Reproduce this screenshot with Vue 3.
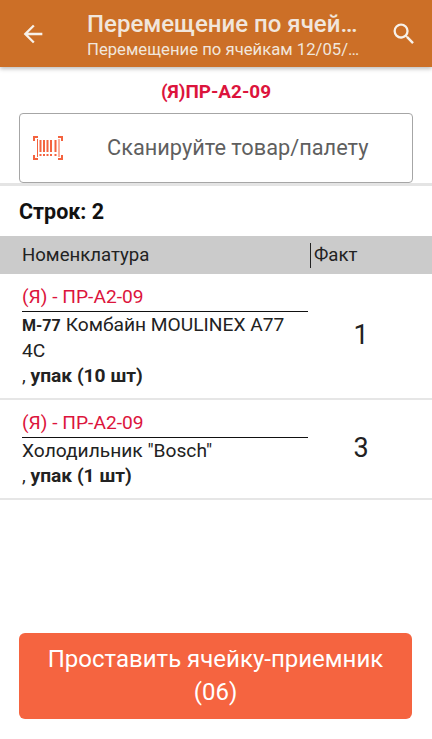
<script setup>
const rows = [
  { id: 1, cell: '(Я) - ПР-А2-09', code: 'М-77', name: 'Комбайн MOULINEX A77 4C', pack: 'упак (10 шт)', fact: 1 },
  { id: 2, cell: '(Я) - ПР-А2-09', code: '', name: 'Холодильник "Bosch"', pack: 'упак (1 шт)', fact: 3 },
];
</script>

<template>
  <div class="screen">
    <header class="toolbar">
      <svg class="back" width="28" height="28" viewBox="0 0 24 24" aria-hidden="true">
        <path d="M20 11H7.83l5.59-5.59L12 4l-8 8 8 8 1.41-1.41L7.83 13H20z" fill="#f7f1ea" />
      </svg>
      <div class="titles">
        <div class="title">Перемещение по ячей…</div>
        <div class="subtitle">Перемещение по ячейкам 12/05/…</div>
      </div>
      <svg class="search" width="28" height="28" viewBox="0 0 24 24" aria-hidden="true">
        <path d="M15.5 14h-.79l-.28-.27A6.47 6.47 0 0 0 16 9.5 6.5 6.5 0 1 0 9.500 16c1.610 0 3.090-.59 4.230-1.570l.27.28v.79l5 4.990L20.490 19l-4.990-5zm-6 0C7.010 14 5 11.990 5 9.500S7.010 5 9.500 5 14 7.010 14 9.500 11.990 14 9.500 14z" fill="#f7f1ea" />
      </svg>
    </header>

    <div class="cell-name">(Я)ПР-А2-09</div>

    <div class="scan-wrap">
      <div class="scan">
        <svg class="barcode" width="30" height="24" viewBox="0 0 30 24" aria-hidden="true">
          <path d="M5 1H1v4M25 1h4v4M5 23H1v-4M25 23h4v-4" fill="none" stroke="#f4633f" stroke-width="2" />
          <path d="M4.500 3v18M26 3v18" stroke="#f4633f" stroke-width="1" />
          <path d="M7.500 4v12M11 4v12M14.500 4v12M18 4v12M22.500 4v12M7.500 18v2M11 18v2M14.500 18v2M18 18v2M22.500 18v2" stroke="#f4633f" stroke-width="2" />
        </svg>
        <span class="scan-text">Сканируйте товар/палету</span>
      </div>
    </div>

    <div class="count">Строк: 2</div>

    <div class="table-head">
      <div class="col-name">Номенклатура</div>
      <div class="col-fact">Факт</div>
    </div>

    <div v-for="row in rows" :key="row.id" class="row">
      <div class="row-main">
        <div class="row-cell">{{ row.cell }}</div>
        <div class="row-name"><b v-if="row.code" class="code">{{ row.code }}</b><span>{{ row.name }}</span></div>
        <div class="row-pack"><span>, </span><b>{{ row.pack }}</b></div>
      </div>
      <div class="row-fact">{{ row.fact }}</div>
    </div>

    <div class="spacer"></div>

    <button class="action">Проставить ячейку-приемник<br />(06)</button>
  </div>
</template>

<style>
html,
body {
  margin: 0;
  background: #fff;
}
</style>

<style scoped>
.screen {
  width: 432px;
  height: 739px;
  display: flex;
  flex-direction: column;
  overflow: hidden;
  background: #fff;
  font-family: Roboto, "Liberation Sans", sans-serif;
  color: #212121;
}

.toolbar {
  flex: none;
  height: 67px;
  display: flex;
  align-items: center;
  padding: 0 14px 0 19px;
  box-sizing: border-box;
  background: #cc6f27;
  box-shadow: 0 2px 4px rgba(0, 0, 0, 0.25);
  position: relative;
}

.titles {
  flex: 1;
  min-width: 0;
  margin-left: 40px;
  padding-top: 2px;
  color: #f1e6dc;
  white-space: nowrap;
}

.title {
  font-size: 24px;
  font-weight: 500;
  line-height: 30px;
}

.subtitle {
  font-size: 16.7px;
  line-height: 21px;
}

.cell-name {
  flex: none;
  margin-top: 13px;
  height: 24px;
  line-height: 24px;
  text-align: center;
  font-size: 18.9px;
  font-weight: 700;
  color: #dc143c;
}

.scan-wrap {
  flex: none;
  margin-top: 9px;
  height: 73px;
  border-bottom: 3px solid #e4e4e4;
  box-sizing: border-box;
  padding: 0 19px;
}

.scan {
  height: 70px;
  display: flex;
  align-items: center;
  box-sizing: border-box;
  border: 1px solid #a6a6a6;
  border-radius: 4px;
  background: #fff;
  padding-left: 13px;
}

.barcode {
  flex: none;
}

.scan-text {
  flex: 1;
  padding-left: 44px;
  padding-bottom: 2px;
  font-size: 21.75px;
  color: #5f5f5f;
  white-space: nowrap;
}

.count {
  flex: none;
  margin-top: 13px;
  height: 26px;
  line-height: 26px;
  padding-left: 19px;
  font-size: 21.5px;
  font-weight: 700;
  color: #111;
}

.table-head {
  flex: none;
  margin-top: 11px;
  height: 38px;
  display: flex;
  align-items: center;
  background: #cbcbcb;
  font-size: 18.6px;
  color: #222;
}

.col-name {
  width: 310px;
  padding-left: 22px;
  box-sizing: border-box;
}

.col-fact {
  height: 25px;
  line-height: 25px;
  border-left: 1px solid #222;
  padding-left: 3px;
}

.row {
  flex: none;
  display: flex;
  align-items: center;
  border-bottom: 2px solid #e6e6e6;
  padding: 8px 0 10px 22px;
}

.row-main {
  width: 286px;
  font-size: 19.2px;
  line-height: 25px;
  color: #222;
}

.row-cell {
  color: #dc143c;
  height: 29px;
  line-height: 30px;
  border-bottom: 1px solid #111;
}

.code {
  font-size: 16px;
  margin-right: 5px;
}

.row-pack b {
  font-weight: 700;
}

.row-fact {
  flex: 1;
  text-align: center;
  font-size: 27px;
  padding-right: 18px;
  color: #222;
}

.spacer {
  flex: 1;
}

.action {
  flex: none;
  margin: 0 20px 20px 19px;
  height: 86px;
  border: none;
  border-radius: 6px;
  background: #f56440;
  color: #fff;
  font-family: inherit;
  font-size: 24px;
  line-height: 33px;
  padding: 0;
}
</style>
